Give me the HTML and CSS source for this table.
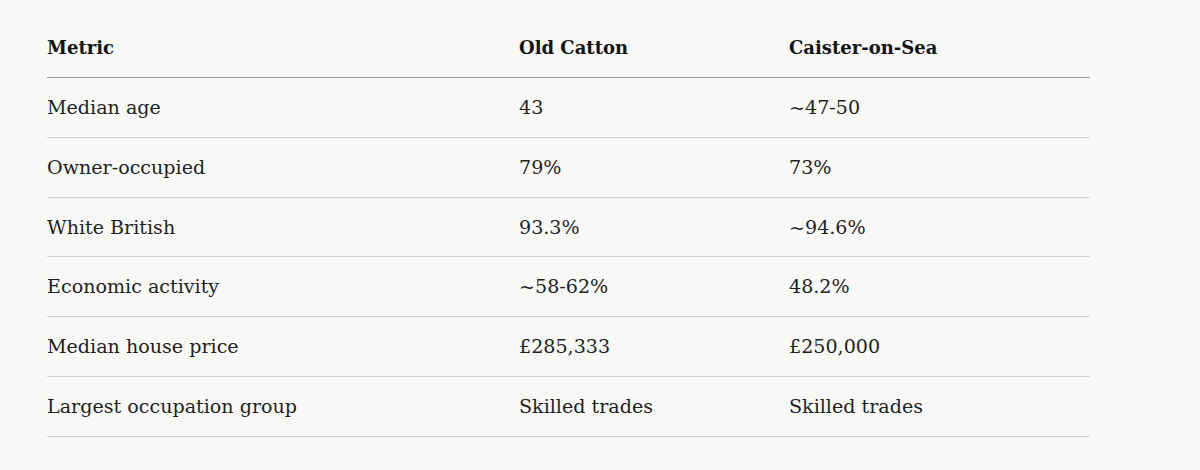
FILE: index.html
```html
<!DOCTYPE html>
<html lang="en">
<head>
<meta charset="utf-8">
<title>Comparison</title>
<link rel="stylesheet" href="styles.css">
</head>
<body>
<div class="page">
  <table class="compare">
    <colgroup>
      <col class="c-metric">
      <col class="c-a">
      <col class="c-b">
    </colgroup>
    <thead>
      <tr><th>Metric</th><th>Old Catton</th><th>Caister-on-Sea</th></tr>
    </thead>
    <tbody>
      <tr><td>Median age</td><td>43</td><td>~47-50</td></tr>
      <tr><td>Owner-occupied</td><td>79%</td><td>73%</td></tr>
      <tr><td>White British</td><td>93.3%</td><td>~94.6%</td></tr>
      <tr><td>Economic activity</td><td>~58-62%</td><td>48.2%</td></tr>
      <tr><td>Median house price</td><td>£285,333</td><td>£250,000</td></tr>
      <tr><td>Largest occupation group</td><td>Skilled trades</td><td>Skilled trades</td></tr>
    </tbody>
  </table>
</div>
</body>
</html>
```

FILE: styles.css
```css
html, body {
  margin: 0;
  padding: 0;
  background: #f8f8f6;
}
.page {
  padding: 18px 0 0 47px;
}
.compare {
  width: 1043px;
  border-collapse: collapse;
  table-layout: fixed;
  font-family: "DejaVu Serif", "Liberation Serif", serif;
  font-size: 19.1px;
  color: #1f1f1f;
}
.c-metric { width: 472px; }
.c-a { width: 270px; }
.c-b { width: 301px; }
.compare th,
.compare td {
  padding: 0;
  text-align: left;
  vertical-align: middle;
}
.compare th {
  height: 59px;
  font-size: 18px;
  font-weight: bold;
  color: #141414;
  border-bottom: 1px solid #9c9c9a;
}
.compare td {
  height: 58.83px;
  border-bottom: 1px solid #d3d3d1;
}
```
